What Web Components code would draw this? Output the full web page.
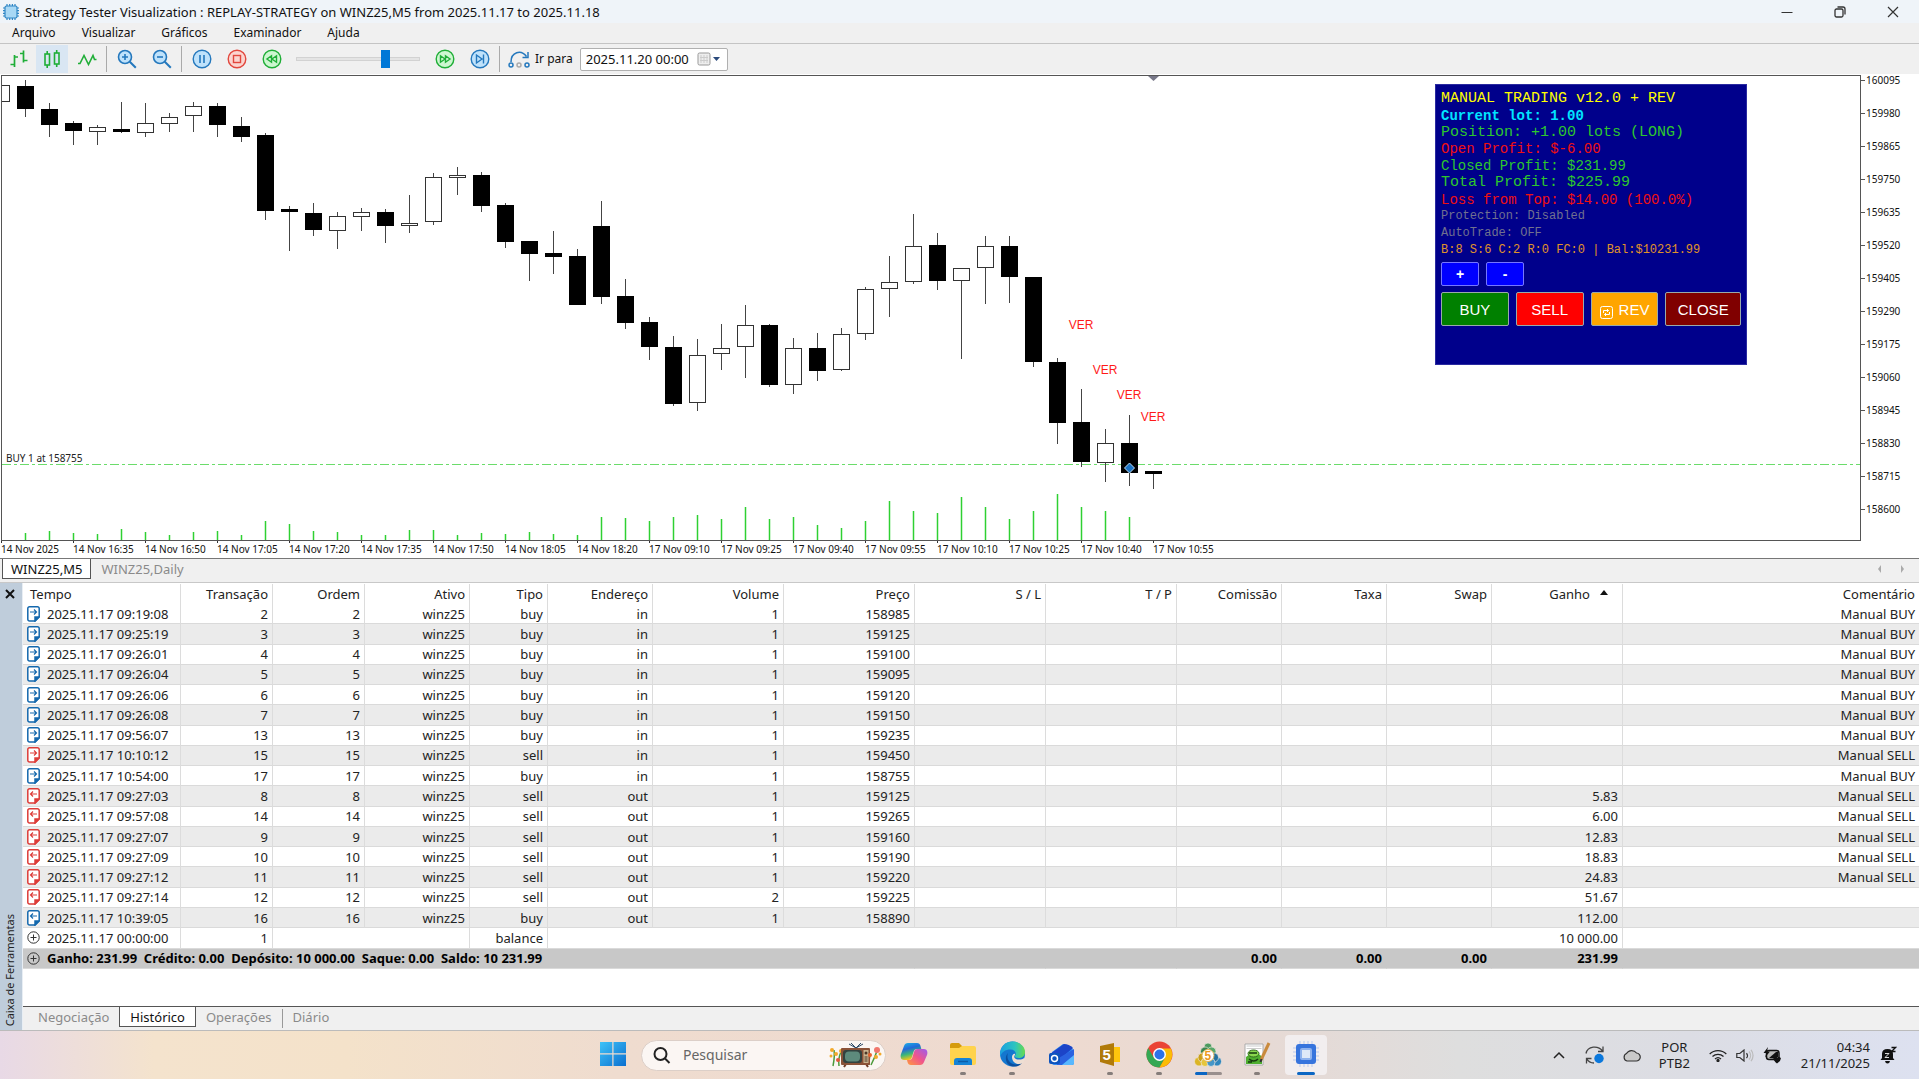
<!DOCTYPE html>
<html lang="pt-BR">
<head>
<meta charset="utf-8">
<title>Strategy Tester Visualization</title>
<style>
html, body { margin: 0; height: 100%; }
body { font: 13px/18px "Noto Sans", "Open Sans", sans-serif; color: #222; background: #f0f0f0; overflow: hidden; }
</style>
</head>
<body>
<tester-app></tester-app>
<script>
const BASE = `*{box-sizing:border-box}button,input{font:inherit;color:inherit;margin:0}
button{border:0;background:none;padding:0;display:flex;align-items:center;justify-content:center}svg{display:block;flex:none}`;
function define(name, render, after) {
  customElements.define(name, class extends HTMLElement {
    connectedCallback() {
      if (this.shadowRoot) return;
      const root = this.attachShadow({ mode: 'open' });
      const t = document.createElement('template');
      t.innerHTML = '<style>' + BASE + '</style>' + render(this);
      root.append(t.content.cloneNode(true));
      if (after) after(this, root);
    }
  });
}

const B = '#2478bd', BF = '#bfe2fb', G = '#1fae37', GF = '#cdf7d0', R = '#e2473d', RF = '#fbd5d0';
const ring = (c, f, inner) => `<svg width="20" height="20" viewBox="0 0 20 20" fill="none" stroke="${c}" stroke-width="1.4"><circle cx="10" cy="10" r="8.8" fill="${f}"/>${inner}</svg>`;
const ICONS = {
  chip: `<svg width="18" height="18" viewBox="0 0 18 18"><path d="M5 1v16M7.7 1v16M10.4 1v16M13 1v16M1 5h16M1 7.7h16M1 10.4h16M1 13h16" stroke="#2f86c5" stroke-width="1.2"/><rect x="3" y="3" width="12" height="12" rx="1.5" fill="#a8d8f5" stroke="#2f86c5" stroke-width="1.2"/></svg>`,
  bars: `<svg width="20" height="20" viewBox="0 0 20 20" fill="none" stroke="${G}" stroke-width="1.7"><path d="M5.500 6v12M1.500 15.500h4M5.500 8h3.500M14.500 1.500v12M11 4.500h3.500M14.500 11.500h4"/></svg>`,
  candles: `<svg width="18" height="20" viewBox="0 0 18 20" fill="none" stroke="${G}" stroke-width="1.6"><rect x="2" y="5" width="4.500" height="11"/><path d="M4.200 2v3M4.200 16v3M13.700 1v3M13.700 15v3"/><rect x="11.500" y="4" width="4.500" height="11"/></svg>`,
  line: `<svg width="20" height="16" viewBox="0 0 20 16" fill="none" stroke="${G}" stroke-width="1.6"><path d="M1 12.500h2l4-8 4.500 9 4.500-9 1.500 4h2"/></svg>`,
  zoomin: `<svg width="20" height="20" viewBox="0 0 20 20" fill="none" stroke="${B}" stroke-width="1.6"><circle cx="8" cy="8" r="6.500" fill="${BF}"/><path d="M5 8h6M8 5v6"/><path d="M12.800 12.800l6 6" stroke-width="2"/></svg>`,
  zoomout: `<svg width="20" height="20" viewBox="0 0 20 20" fill="none" stroke="${B}" stroke-width="1.6"><circle cx="8" cy="8" r="6.500" fill="${BF}"/><path d="M5 8h6"/><path d="M12.800 12.800l6 6" stroke-width="2"/></svg>`,
  pause: ring(B, BF, '<path d="M8 6v8M12 6v8" stroke-width="1.600"/>'),
  stop: ring(R, RF, '<rect x="6.500" y="6.500" width="7" height="7"/>'),
  rewind: ring(G, GF, '<path d="M9.500 6.800v6.400L5 10zM14.500 6.800v6.400L10 10z"/>'),
  forward: ring(G, GF, '<path d="M10.500 6.800v6.400L15 10zM5.500 6.800v6.400L10 10z"/>'),
  step: ring(B, BF, '<path d="M6.500 6v8l5.500-4zM13.500 5.500v9"/>'),
  jump: `<svg width="22" height="18" viewBox="0 0 22 18" fill="none" stroke="${B}" stroke-width="1.500"><path d="M3 12C3 2 13-1 18.500 6.500M20 2v5.500h-5.500"/><circle cx="3" cy="15" r="2"/><circle cx="11" cy="15" r="2" stroke="#aaa"/><circle cx="19" cy="15" r="2"/></svg>`
};

/* ---- title, menu, toolbar ---- */
define('title-bar', () => `<style>
:host{display:flex;align-items:center;height:23px;background:#eff4f9;padding-left:2px;color:#111}
.t{flex:1;padding-left:5px}
nav{display:flex}
button{width:53px;height:23px}
</style>${ICONS.chip}<span class="t">Strategy Tester Visualization : REPLAY-STRATEGY on WINZ25,M5 from 2025.11.17 to 2025.11.18</span>
<nav>
<button aria-label="Minimizar"><svg width="12" height="12"><path d="M.5 6.500h11" stroke="#333"/></svg></button>
<button aria-label="Restaurar"><svg width="12" height="12" fill="none" stroke="#333" stroke-width="1.300"><rect x="1" y="3" width="8" height="8" rx="1.500"/><path d="M3.500 1h5.500a2 2 0 0 1 2 2v5.500"/></svg></button>
<button aria-label="Fechar"><svg width="12" height="12"><path d="M1 1l10 10M11 1L1 11" stroke="#333" stroke-width="1.200"/></svg></button>
</nav>`);

define('menu-bar', () => `<style>
:host{display:flex;gap:26px;height:21px;padding-left:12px;background:#f0f0f0;border-bottom:1px solid #c4c4c4;font-size:12px;color:#111}
</style><button>Arquivo</button><button>Visualizar</button><button>Gráficos</button><button>Examinador</button><button>Ajuda</button>`);

define('tool-bar', () => `<style>
:host{display:flex;align-items:center;height:30px;background:#f0f0f0;font-size:12px;color:#111;padding-left:1px}
button{width:35px;height:28px}
button.on{background:#d9e6f3;width:32px;margin-right:1px}
hr{width:1px;height:26px;border:0;background:#aaa;margin:0 2px}
input[type=range]{appearance:none;width:124px;height:20px;background:none;margin:0 7px}
input[type=range]::-webkit-slider-runnable-track{height:4px;background:#e4e4e4;border:1px solid #d2d2d2}
input[type=range]::-webkit-slider-thumb{appearance:none;width:9px;height:18px;margin-top:-8px;background:#0078d7}
label{margin:0 7px 0 5px}
.date{display:flex;align-items:center;height:23px;width:148px;background:#fff;border:1px solid #b0b0b0;border-radius:2px;padding:0 5px}
.date input{border:0;outline:0;width:110px;padding:0;background:none;font-size:13px}
.date button{width:26px;height:18px;gap:2px}
</style>
<button aria-label="Barras">${ICONS.bars}</button><button class="on" aria-label="Velas">${ICONS.candles}</button><button aria-label="Linha">${ICONS.line}</button>
<hr><button aria-label="Ampliar">${ICONS.zoomin}</button><button aria-label="Reduzir">${ICONS.zoomout}</button>
<hr><button aria-label="Pausar">${ICONS.pause}</button><button aria-label="Parar">${ICONS.stop}</button><button aria-label="Mais lento">${ICONS.rewind}</button>
<input type="range" min="0" max="100" value="74" aria-label="Velocidade">
<button aria-label="Mais rápido">${ICONS.forward}</button><button aria-label="Passo">${ICONS.step}</button>
<hr><span style="padding-left:6px">${ICONS.jump}</span><label for="d">Ir para</label>
<span class="date"><input id="d" value="2025.11.20 00:00"><button aria-label="Calendário"><svg width="14" height="14" viewBox="0 0 14 14" fill="#eee" stroke="#999"><rect x="1" y="1" width="12" height="12" rx="1.500"/><path d="M4 3v8M7 3v8M10 3v8M3 5.500h8M3 8.500h8" stroke="#ccc"/></svg><svg width="7" height="4"><path d="M0 0h7L3.500 4z" fill="#2b4a7c"/></svg></button></span>`);

/* ---- chart ---- */
/* each candle: fill (1 = falling), body top, body bottom, high, low, volume top; units are thirds of a pixel */
const CANDLES = [
[0,76,126,76,126,0],[1,77,147,61,170,1420],[1,146,195,129,231,1412],[1,190,212,184,255,1418],[0,202,216,194,255,1422],
[1,206,216,126,220,1408],[0,190,220,129,231,1416],[0,172,191,160,216,1424],[0,138,169,126,216,1416],[1,138,195,129,231,1412],
[1,199,230,172,247,1424],[1,225,452,219,480,1384],[1,447,457,438,574,1392],[1,460,509,429,529,1412],[0,469,514,456,568,1415],
[0,455,471,443,514,1426],[1,455,499,447,548,1424],[0,490,499,405,518,1411],[0,352,487,340,495,1409],[0,344,353,322,406,1424],
[1,344,437,336,457,1418],[1,436,547,430,564,1423],[1,542,582,542,663,1416],[1,580,590,512,641,1421],[1,589,736,567,736,1424],
[1,498,710,424,733,1372],[1,709,788,657,808,1374],[1,787,861,772,900,1384],[1,860,1033,829,1037,1370],[0,884,1029,838,1053,1364],
[0,864,881,791,930,1378],[0,796,861,735,955,1342],[1,795,976,791,980,1376],[0,864,976,834,1003,1370],[1,864,934,818,964,1394],
[0,822,930,803,934,1403],[0,688,822,680,839,1384],[0,666,688,589,770,1322],[0,559,666,463,671,1353],[1,555,663,520,689,1360],
[0,624,663,624,896,1310],[0,559,624,528,732,1342],[1,559,651,528,728,1376],[1,650,907,650,920,1352],[1,906,1088,894,1153,1301],
[1,1086,1205,987,1221,1342],[0,1148,1210,1108,1265,1352],[1,1148,1240,1066,1278,1370],[1,1232,1243,1232,1286,0]];
const PRICES = Array.from({ length: 14 }, (_, i) => 160095 - 115 * i);
const TIMES = ['14 Nov 2025','14 Nov 16:35','14 Nov 16:50','14 Nov 17:05','14 Nov 17:20','14 Nov 17:35','14 Nov 17:50','14 Nov 18:05','14 Nov 18:20','17 Nov 09:10','17 Nov 09:25','17 Nov 09:40','17 Nov 09:55','17 Nov 10:10','17 Nov 10:25','17 Nov 10:40','17 Nov 10:55'];
const py = v => Math.round(v / 3) - 16;
function candle([down, top, bot, hi, lo, vol], i) {
  const x = 24 * i - 1, t = py(top), b = py(bot);
  let s = `<path d="M${x + .5} ${py(hi)}V${py(lo)}" stroke="#444"/>`;
  s += `<rect x="${x - 8 + .5}" y="${t + .5}" width="16" height="${Math.max(b - t - 1, 2)}" fill="${down ? '#000' : '#fff'}" stroke="${down ? '#000' : '#333'}"/>`;
  if (vol) s += `<path d="M${x + .5} ${py(vol)}V466" stroke="#2fd032" stroke-width="1.500"/>`;
  return s;
}
define('price-chart', () => `<style>
:host{display:grid;grid-template-columns:1fr 58px;grid-template-rows:1fr 17px;background:#fff;padding-left:1px;font-size:10px;line-height:12px;color:#111;min-height:0;border-bottom:1px solid #777}
.plot{position:relative;border:1px solid #555;overflow:hidden;min-height:0;margin-top:1px}
.plot>svg{width:100%;height:100%}
trade-panel{position:absolute;right:113px;top:8px}
.prices{display:flex;flex-direction:column;gap:21px;overflow:hidden}
.prices span{display:flex;align-items:center;gap:1px}
.prices span::before{content:"";width:4px;height:1px;background:#555}
.times{grid-column:1/3;display:flex;overflow:hidden}
.times span{width:72px;flex:none;white-space:nowrap}
.times span::before{content:"";display:block;width:1px;height:2px;background:#333}
</style>
<div class="plot"><svg>
<path d="M0 388.500H3000" stroke="#6bdc6b" stroke-dasharray="9 3 3 3"/>
${CANDLES.map(candle).join('')}
<path d="M1146 0h11l-5.500 5z" fill="#778"/>
<path d="M1127.500 387l5 5-5 5-5-5z" fill="#1c74c4" stroke="#bcdcf5"/>
<text x="4" y="386" font-size="10" fill="#222">BUY 1 at 158755</text>
<g font-family="Liberation Sans, Arial, sans-serif" font-size="12" fill="#ff1a1a" text-anchor="middle">
<text x="1079" y="253">VER</text><text x="1103" y="298">VER</text><text x="1127" y="323">VER</text><text x="1151" y="345">VER</text></g>
</svg><trade-panel></trade-panel></div>
<div class="prices">${PRICES.map(p => `<span>${p}</span>`).join('')}</div>
<div class="times">${TIMES.map(p => `<span>${p}</span>`).join('')}</div>`);

define('trade-panel', () => `<style>
:host{display:block;width:312px;background:#00008b;border:1px solid #2a2aa0;padding:6px 5px 38px;color:#fff}
.info{display:flex;flex-direction:column;height:167px;font-family:"Liberation Mono",monospace;white-space:pre}
.info span{flex:1;display:flex;align-items:center;line-height:16px}
.l{font-size:15px}.m{font-size:14px}.s{font-size:12px}
.b{font-weight:bold}
.row{display:flex;gap:7px;margin-top:4px}
.row+.row{margin-top:6px}
button{border:1px solid #9aa;border-radius:2px;color:#fff;height:34px;flex:68;font:15px "Liberation Sans",sans-serif}
button.q{flex:none;width:38px;height:24px;background:#00f;font-size:14px;font-weight:bold;border-color:#77f}
</style>
<div class="info">
<span class="l" style="color:#ff0">MANUAL TRADING v12.0 + REV</span>
<span class="m b" style="color:#00e5ff">Current lot: 1.00</span>
<span class="l" style="color:#2dc72d">Position: +1.00 lots (LONG)</span>
<span class="m" style="color:#f01010">Open Profit: $-6.00</span>
<span class="m" style="color:#2dc72d">Closed Profit: $231.99</span>
<span class="l" style="color:#2dc72d">Total Profit: $225.99</span>
<span class="m" style="color:#f01010">Loss from Top: $14.00 (100.0%)</span>
<span class="s" style="color:#71718f">Protection: Disabled</span>
<span class="s" style="color:#71718f">AutoTrade: OFF</span>
<span class="s" style="color:#e09428">B:8 S:6 C:2 R:0 FC:0 | Bal:$10231.99</span>
</div>
<div class="row"><button class="q">+</button><button class="q">-</button></div>
<div class="row"><button style="background:#008000">BUY</button><button style="background:#f00">SELL</button>
<button style="background:#ffa500;gap:6px"><svg width="13" height="13" viewBox="0 0 13 13" fill="none" stroke="#fff" style="margin-top:6px"><rect x=".5" y=".5" width="12" height="12" rx="2"/><path d="M3.500 7V4.500h5M7 3l1.500 1.500L7 6M9.500 6v2.500h-5M6 7L4.500 8.500 6 10"/></svg>REV</button>
<button style="background:#800000;flex:76">CLOSE</button></div>`);

/* ---- chart tabs ---- */
define('chart-tabs', () => `<style>
:host{display:flex;align-items:flex-start;height:24px;background:#f0f0f0;padding:0 6px 0 2px;border-bottom:1px solid #c8c8c8;color:#8a8a8a}
button{height:20px;padding:0 10px}
.on{background:#fff;color:#111;border:1px solid #555;border-top:0;padding:0 8px}
i{flex:1}svg{margin:6px 9px 0}
</style><button class="on">WINZ25,M5</button><button>WINZ25,Daily</button><i></i>
<svg width="4" height="8"><path d="M3 0v8L0 4z" fill="#aaa"/></svg><svg width="4" height="8"><path d="M1 0v8l3-4z" fill="#aaa"/></svg>`);

/* ---- history table ---- */
const doc = (c, out) => `<svg width="13" height="16" viewBox="0 0 13 16" fill="none" stroke="${c}" stroke-width="1.500"><path d="M8 15H2.500A1.700 1.700 0 0 1 .8 13.300V2.500A1.700 1.700 0 0 1 2.500.800h8A1.700 1.700 0 0 1 12.200 2.500V11z" fill="#fff"/><path d="M8 15v-4h4z" fill="${c}"/><path stroke-width="1.200" d="${out ? 'M10 6H3.500M6 3.500L3.500 6 6 8.500' : 'M3 6h6.500M7 3.500L9.500 6 7 8.500'}"/></svg>`;
const plus = `<svg width="13" height="13" viewBox="0 0 13 13" fill="none" stroke="#333"><circle cx="6.500" cy="6.500" r="5.700"/><path d="M3.500 6.500h6M6.500 3.500v6"/></svg>`;
const ROWS = `09:19:08|2|buy|in|1|158985||Manual BUY
09:25:19|3|buy|in|1|159125||Manual BUY
09:26:01|4|buy|in|1|159100||Manual BUY
09:26:04|5|buy|in|1|159095||Manual BUY
09:26:06|6|buy|in|1|159120||Manual BUY
09:26:08|7|buy|in|1|159150||Manual BUY
09:56:07|13|buy|in|1|159235||Manual BUY
10:10:12|15|sell|in|1|159450||Manual SELL
10:54:00|17|buy|in|1|158755||Manual BUY
09:27:03|8|sell|out|1|159125|5.83|Manual SELL
09:57:08|14|sell|out|1|159265|6.00|Manual SELL
09:27:07|9|sell|out|1|159160|12.83|Manual SELL
09:27:09|10|sell|out|1|159190|18.83|Manual SELL
09:27:12|11|sell|out|1|159220|24.83|Manual SELL
09:27:14|12|sell|out|2|159225|51.67|
10:39:05|16|buy|out|1|158890|112.00|`.split('\n').map(r => r.split('|'));
const HEADS = ['Tempo','Transação','Ordem','Ativo','Tipo','Endereço','Volume','Preço','S / L','T / P','Comissão','Taxa','Swap','Ganho','Comentário'];
const WIDTHS = [158,92,92,105,78,105,131,131,131,131,105,105,105,131];
define('history-table', () => `<style>
:host{display:block;background:#fff;padding-top:1px}
table{width:100%;height:385px;table-layout:fixed;border-collapse:separate;border-spacing:0}
th,td{height:20px;padding:0 4px 0 0;text-align:right;white-space:nowrap;line-height:16px}
th{font-weight:normal;border-right:1px solid #dcdcdc}
td{border-right:1px solid #dcdcdc;border-bottom:1px solid #dadada}
th:first-child{text-align:left;padding-left:7px}
td:first-child{text-align:left;padding-left:4px}
th:last-child,td:last-child{border-right:0}
tbody tr:nth-child(even){background:#ebebeb}
tbody tr.sum{background:#c8c8c8;font-weight:bold;color:#000}
.sum td{border-right-color:transparent}
.c{display:flex;align-items:center;gap:7px}
.up{display:inline-block;margin:0 10px 4px 10px}
</style>
<table><colgroup>${WIDTHS.map(w => `<col style="width:${w}px">`).join('')}<col></colgroup>
<thead><tr>${HEADS.map(h => `<th scope="col">${h}${h === 'Ganho' ? '<svg class="up" width="8" height="5"><path d="M0 5l4-5 4 5z" fill="#111"/></svg>' : ''}</th>`).join('')}</tr></thead>
<tbody>${ROWS.map(([t, n, k, d, v, p, g, c]) => `<tr><td><span class="c">${doc(k === 'buy' ? '#1468ad' : '#dd3c38', d === 'out')}2025.11.17 ${t}</span></td><td>${n}</td><td>${n}</td><td>winz25</td><td>${k}</td><td>${d}</td><td>${v}</td><td>${p}</td><td></td><td></td><td></td><td></td><td></td><td>${g}</td><td>${c}</td></tr>`).join('')}
<tr><td><span class="c">${plus}2025.11.17 00:00:00</span></td><td>1</td><td colspan="2"></td><td>balance</td><td colspan="9">10 000.00</td><td></td></tr>
<tr class="sum"><td colspan="8"><span class="c">${plus}<span style="white-space:pre">Ganho: 231.99  Crédito: 0.00  Depósito: 10 000.00  Saque: 0.00  Saldo: 10 231.99</span></span></td><td></td><td></td><td>0.00</td><td>0.00</td><td>0.00</td><td>231.99</td><td></td></tr>
</tbody></table>`);

define('tool-box', () => `<style>
:host{display:flex;height:448px;background:#fff;border-bottom:1px solid #bbb}
aside{width:23px;background:#bfcddb;display:flex;flex-direction:column;justify-content:space-between;align-items:center;padding:6px 3px 4px 0;border-right:1px solid #e8eef4}
aside span{writing-mode:vertical-rl;transform:rotate(180deg);font-size:11px;line-height:16px}
main{flex:1;display:flex;flex-direction:column;justify-content:space-between;min-width:0}
nav{display:flex;height:24px;background:#f0f0f0;border-top:1px solid #555;color:#8a8a8a;padding-left:5px;align-items:flex-start}
nav button{height:20px;padding:0 10px}
nav .on{background:#fff;color:#111;border:1px solid #555;border-top:0}
nav hr{width:1px;height:19px;margin:2px 0 0;border:0;background:#999}
</style><aside><button aria-label="Fechar"><svg width="10" height="10"><path d="M1 1l8 8M9 1L1 9" stroke="#111" stroke-width="2"/></svg></button><span>Caixa de Ferramentas</span></aside>
<main><history-table></history-table><nav><button>Negociação</button><button class="on">Histórico</button><button>Operações</button><hr><button>Diário</button></nav></main>`);

/* ---- taskbar ---- */
const APPS = [
['Copilot','',`<svg width="28" height="24" viewBox="0 0 28 24"><defs><linearGradient id="a" x1="0" y1="0" x2=".3" y2="1"><stop stop-color="#1cb7e8"/><stop offset=".4" stop-color="#2468d8"/><stop offset=".7" stop-color="#3cb878"/><stop offset="1" stop-color="#f5c518"/></linearGradient><linearGradient id="b" x1="1" y1="0" x2="0" y2="1"><stop stop-color="#9b5cf0"/><stop offset=".5" stop-color="#f0558c"/><stop offset="1" stop-color="#ff9a3c"/></linearGradient></defs><path d="M8 1h9c2 0 3 1 3.500 3l.8 3H17c-2 0-3 1-3.500 3l-1.500 5c-.6 2-1.500 3-3.500 3H4C1 18 0 15 1 12L4 4c.7-2 2-3 4-3z" fill="url(#a)"/><path d="M20 23h-9c-2 0-3-1-3.500-3L7 18h2c2 0 3-1 3.500-3L14 10c.6-2 1.500-3 3.500-3H24c3 0 4 3 3 6l-3 7c-.7 2-2 3-4 3z" fill="url(#b)"/></svg>`],
['Explorador','d',`<svg width="28" height="24" viewBox="0 0 28 24"><path d="M1 3q0-2 2-2h7l3 3v4H1z" fill="#d59b0c"/><path d="M1 6l9 0 3-2h12q2 0 2 2v15q0 2-2 2H3q-2 0-2-2z" fill="#ffd34d"/><path d="M5 23v-4q0-3 3-3h12q3 0 3 3v4z" fill="#1583d6"/><path d="M9 19.500h10" stroke="#0b5ca8" stroke-width="1.500"/></svg>`],
['Edge','d',`<svg width="27" height="26" viewBox="0 0 27 26"><defs><linearGradient id="e"><stop stop-color="#1a9fe0"/><stop offset=".6" stop-color="#2cc4c0"/><stop offset="1" stop-color="#68dc4c"/></linearGradient></defs><circle cx="13.500" cy="13" r="12.500" fill="#1477cf"/><path d="M1 13C1 5 7 .5 13.500.5S26 5 26 11c0 4-3 6-6.500 6-3 0-4.500-1.500-3-3 1-3-1-5.500-5-5.500C6 8.500 2.500 11 1 16z" fill="url(#e)"/><path d="M9 12c-2 5 1 11 8 11.500 3 0 5.500-1 7-3-3 6-10 6-14 3.500C6 21 6 15 9 12z" fill="#0c4f9e"/><path d="M16 14c-2 2 0 4.500 4 4.500 2 0 4-.5 5-1.500l1 1-2 4c-6 3-11-1-11-6 0-2 2-4 3-3z" fill="#efdfd3"/></svg>`],
['Correio','',`<svg width="27" height="23" viewBox="0 0 27 23"><path d="M4 9L15 1l9 3 2 7v9q0 2-2 2H6q-2 0-2-2z" fill="#2f8bf0"/><path d="M2 11L16 1q5 0 9 4L12 16z" fill="#1c44c8"/><path d="M9 16L26 6v7L14 22H9z" fill="#2a62e0"/><path d="M14 22L26 12v8q0 2-2 2z" fill="#58b8ff"/><rect x="1" y="10" width="11" height="11" rx="2" fill="#0d53bd"/><circle cx="6.500" cy="15.500" r="3" fill="none" stroke="#fff" stroke-width="1.500"/></svg>`],
['Editor','d',`<svg width="24" height="25" viewBox="0 0 24 25"><path d="M12 5h10v15H12z" fill="#ffc50d"/><path d="M2 4L16 1v23L2 20z" fill="#b17a09"/><text x="4.500" y="18" font-family="Liberation Sans" font-size="15" font-weight="bold" fill="#fff">5</text></svg>`],
['Chrome','d',`<svg width="27" height="27" viewBox="0 0 27 27"><circle cx="13.500" cy="13.500" r="13" fill="#ea4335"/><path d="M2.200 7a13 13 0 0 0 11.300 19.500L19 17 8 17z" fill="#34a853"/><path d="M24.800 7.500H13.500L19 17l-5.500 9.500A13 13 0 0 0 24.800 7.500z" fill="#fbbc05"/><circle cx="13.500" cy="13.500" r="6.500" fill="#fff"/><circle cx="13.500" cy="13.500" r="5" fill="#2d72e8"/></svg>`],
['MetaTrader','m',`<svg width="28" height="25" viewBox="0 0 28 25"><g stroke="#efe6df" stroke-width=".7"><circle cx="14" cy="5" r="4" fill="#4b9a5e"/><circle cx="11" cy="9.500" r="4.500" fill="#3c8650"/><circle cx="17.500" cy="9.500" r="4.500" fill="#58a76a"/><circle cx="5" cy="19.500" r="4.500" fill="#dcb524"/><circle cx="8.500" cy="15.500" r="4.500" fill="#c99f1a"/><circle cx="11" cy="20.500" r="4" fill="#e6c63c"/><circle cx="23" cy="19.500" r="4.500" fill="#2f86bd"/><circle cx="20" cy="15.500" r="4.500" fill="#25709f"/><circle cx="17" cy="20.500" r="4" fill="#4596c8"/></g><circle cx="14" cy="13.500" r="6" fill="#fff" stroke="#e2b45c"/><text x="10.500" y="18" font-family="Liberation Sans" font-size="12" font-weight="bold" fill="#ee9a1c">5</text></svg>`],
['Notepad++','d',`<svg width="27" height="24" viewBox="0 0 27 24"><path d="M1 2h18v21H1z" fill="#fff" stroke="#aaa"/><path d="M2.500 4h15M2.500 6.500h15" stroke="#ccc"/><path d="M2 15q4-4 8-3 5-1 8 3v7H2z" fill="#4fae2f"/><ellipse cx="9.500" cy="11.500" rx="5.500" ry="3.500" fill="#8ad84d" stroke="#2f6b1d"/><path d="M5 11h8M5 17q5 4 9 0M4 20h4" stroke="#173b10" stroke-width="1.500" fill="none"/><path d="M25 1l-8 17" stroke="#c98a3c" stroke-width="3"/><path d="M17.500 17l-1 3" stroke="#333" stroke-width="2"/></svg>`],
['Strategy Tester','a',`<svg width="28" height="26" viewBox="0 0 28 26"><path d="M8 0v26M12 0v26M16 0v26M20 0v26M1 7h26M1 11h26M1 15h26M1 19h26" stroke="#b9c9ec"/><rect x="4" y="3" width="20" height="20" rx="3" fill="#3674dd"/><rect x="9" y="8" width="10" height="10" rx="1" fill="#dfe9f8" stroke="#8eb2ee" stroke-width="2"/></svg>`]];
define('task-bar', () => `<style>
:host{display:grid;grid-template-columns:1fr auto 1fr;height:48px;align-items:center;
background:linear-gradient(90deg,#e8d9e6 0,#f4e3cd 8%,#f4e2ca 18%,#efdccf 32%,#eedad0 55%,#e5dad6 68%,#dedede 76%,#dcdde4 88%,#dde1f0 100%)}
.mid{grid-column:2;display:flex;align-items:center;height:48px}
.app{width:42px;height:40px;margin-right:7px;position:relative;border-radius:4px;padding-bottom:2px}
.start{margin-right:7px}
.app:last-child{margin:0}
.search{display:flex;align-items:center;width:245px;height:31px;border-radius:16px;background:#fbf6f3;border:1px solid #dccfc8;padding:0 3px 0 11px;margin-right:7px}
.search input{flex:1;min-width:0;border:0;outline:0;background:none;font-size:14px;margin-left:12px;padding:0}
.search input::placeholder{color:#666;opacity:1}
.app::after{position:absolute;bottom:0;left:18px;width:6px;height:3px;border-radius:2px;background:#857d7a}
.d::after,.m::after,.a::after{content:""}
.m::after{left:8px;width:27px;background:linear-gradient(90deg,#0b66c3 45%,#998f8d 45%)}
.a{background:#f2eeef}
.a::after{left:12px;width:18px;background:#0b66c3}
.tray{grid-column:3;display:flex;align-items:center;justify-content:flex-end;padding-right:22px;color:#222;line-height:16px}
.tray button{min-width:0}
.clk{text-align:right;margin:0 9px 0 19px}
</style>
<div class="mid">
<button class="app start" aria-label="Iniciar"><svg width="26" height="24"><defs><linearGradient id="w" x2="1" y2="1"><stop stop-color="#3fc3f8"/><stop offset="1" stop-color="#0a6fd0"/></linearGradient></defs><path d="M0 0h12.300v11.300H0zM13.500 0H26v11.300H13.500zM0 12.500h12.300V24H0zM13.500 12.500H26V24H13.500z" fill="url(#w)"/></svg></button>
<div class="search"><svg width="18" height="17" fill="none" stroke="#222" stroke-width="2"><circle cx="7.500" cy="7" r="6"/><path d="M12 11.500l4.500 4.500"/></svg><input placeholder="Pesquisar" aria-label="Pesquisar">
<svg width="53" height="26" viewBox="0 0 53 26"><path d="M22 1l5 5 5-5M20 2l7 4 7-4" stroke="#2d4a66" fill="none"/><path d="M4 24Q6 14 5 8M10 24Q9 16 12 10M42 23q4-8 6-14M40 23q0-6 1-10" stroke="#4c9a3c" fill="none" stroke-width="1.500"/><g fill="#f3a92b"><circle cx="3" cy="8" r="2"/><circle cx="7" cy="12" r="2"/><circle cx="2" cy="14" r="1.500"/><circle cx="12" cy="9" r="2"/><circle cx="47" cy="15" r="2"/><circle cx="51" cy="12" r="1.500"/></g><circle cx="48" cy="8" r="3" fill="#f0766c"/><circle cx="9" cy="18" r="2" fill="#e2563c"/><path d="M17 22l-2 3M37 22l2 3" stroke="#703c26" stroke-width="2"/><rect x="12" y="6" width="29" height="17" rx="1" fill="#8a5238"/><rect x="14" y="8" width="19" height="13" rx="3" fill="#33423f"/><rect x="16" y="9.500" width="15" height="10" rx="4" fill="#5d8a7c"/><rect x="34.500" y="8" width="5" height="13" fill="#c9b48f"/><circle cx="37" cy="11" r="1.500" fill="#4c3828"/><path d="M35.500 15h3M35.500 17h3M35.500 19h3" stroke="#4c3828"/><circle cx="41" cy="13" r="2" fill="#e9622e"/></svg></div>
${APPS.map(([n, c, s]) => `<button class="app ${c}" aria-label="${n}">${s}</button>`).join('')}
</div>
<div class="tray">
<button aria-label="Ícones ocultos" style="margin-right:20px"><svg width="12" height="8"><path d="M1 7l5-5 5 5" fill="none" stroke="#222" stroke-width="1.500"/></svg></button>
<button aria-label="Sincronização" style="margin-right:17px"><svg width="20" height="18" viewBox="0 0 20 18" fill="none" stroke="#444" stroke-width="1.300"><path d="M1 7.500C2.500 0 13-1 17.500 5M18 .5V5.500h-5M1.500 17.500V12.500h5M1.500 12.500Q4 17 9 17"/><circle cx="14" cy="12.500" r="4.700" fill="#0b78dc" stroke="none"/></svg></button>
<button aria-label="OneDrive" style="margin-right:18px"><svg width="19" height="13"><path d="M5 12a4 4 0 0 1-.5-7.500A6 6 0 0 1 14.500 4 4 4 0 0 1 14 12z" fill="#c9c9c9" stroke="#333" stroke-width="1.200"/></svg></button>
<button style="margin-right:19px">POR<br>PTB2</button>
<button aria-label="Wi-Fi" style="margin-right:9px"><svg width="18" height="13" fill="none" stroke="#222" stroke-width="1.300"><path d="M.7 5A12 12 0 0 1 17.300 5M3.500 7.500a8 8 0 0 1 11 0M6 10a4.500 4.500 0 0 1 6 0"/><circle cx="9" cy="11.500" r="1" fill="#222"/></svg></button>
<button aria-label="Som" style="margin-right:9px"><svg width="18" height="13" fill="none" stroke="#333" stroke-width="1.200"><path d="M.8 4.500h3L8 1v11L3.800 8.500h-3z"/><path d="M10.500 4a4 4 0 0 1 0 5"/><path d="M13 2.500a6 6 0 0 1 0 8M15 .8a9 9 0 0 1 0 11.400" stroke="#bbb"/></svg></button>
<button aria-label="Bateria"><svg width="19" height="17" viewBox="0 0 19 17"><rect x="3.500" y="3.500" width="12.500" height="9" rx="2.500" fill="#bbb" stroke="#111" stroke-width="1.500"/><path d="M6 11l7-6h2v5l-2 1.500z" fill="#111"/><path d="M5 0L.5 6h3L2 10.500 7 4.500H4zM14 16.500q-4-3-3.500-5.500 1.500-2 3.500 0 2-2 3.800 0 .5 2.500-3.800 5.500z" fill="#111"/></svg></button>
<button class="clk">04:34<br>21/11/2025</button>
<button aria-label="Notificações"><svg width="18" height="18" viewBox="0 0 18 18"><path d="M3 12V8q0-5 5.500-5T14 8v4l1.500 2H1.500zM6 15h5q-.5 2.500-2.500 2.500T6 15z" fill="#111"/><path d="M12.500 1.500h4l-4 4h4" stroke="#111" stroke-width="1.300" fill="none"/><path d="M6 7.500h4l-4 4h4" stroke="#ddd" fill="none"/></svg></button>
</div>`);

define('tester-app', () => `<style>
:host{display:flex;flex-direction:column;height:100vh}
price-chart{flex:1}
</style><title-bar></title-bar><menu-bar></menu-bar><tool-bar></tool-bar><price-chart></price-chart><chart-tabs></chart-tabs><tool-box></tool-box><task-bar></task-bar>`);
</script>
</body>
</html>
